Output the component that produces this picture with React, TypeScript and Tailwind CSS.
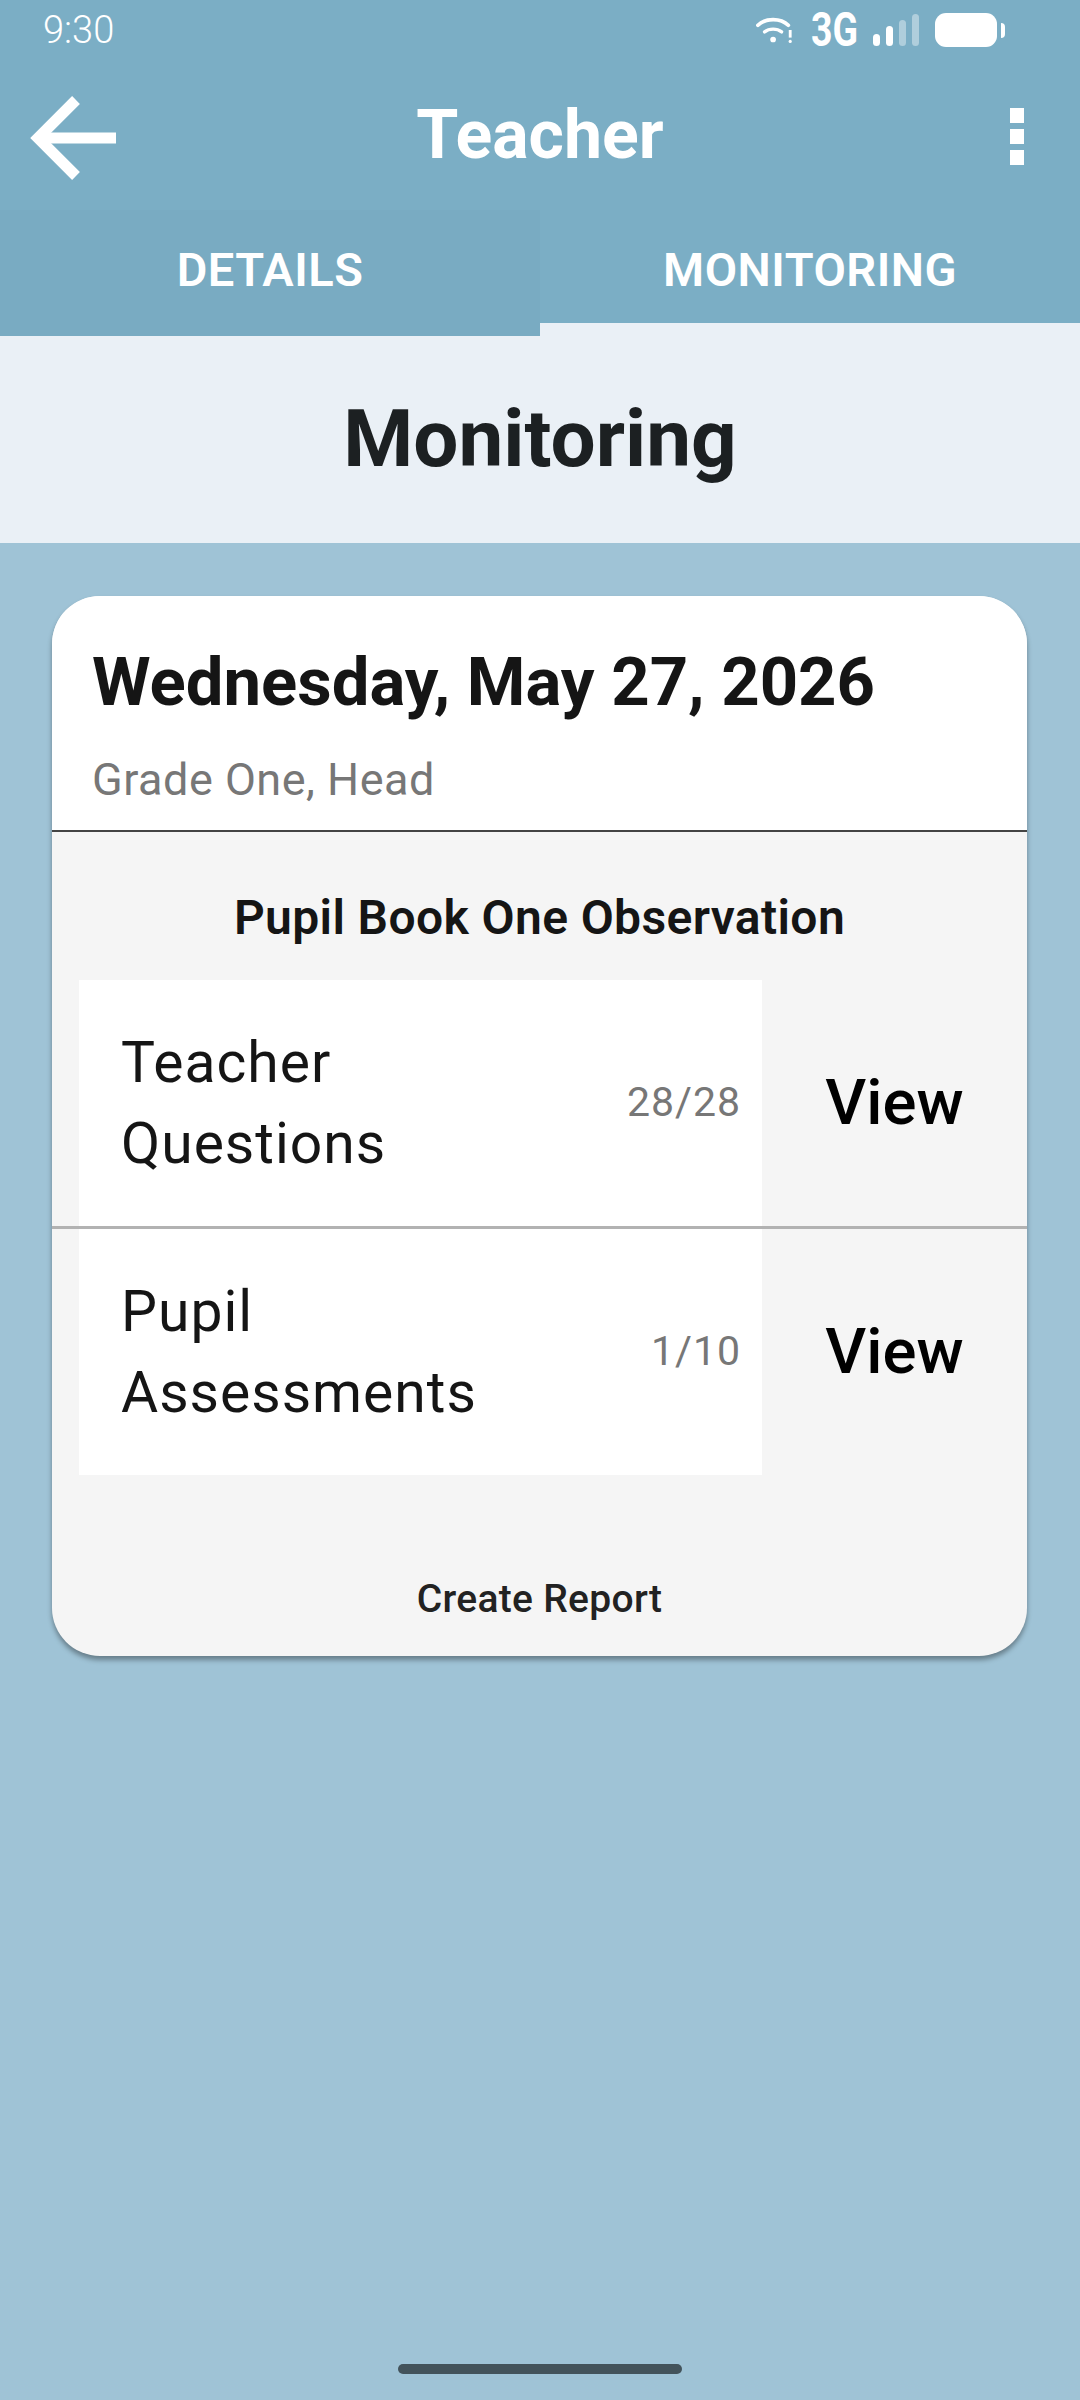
function Row({ a, b, n, border }: { a: string; b: string; n: string; border?: boolean }) {
  return (
    <div className={`flex items-stretch pl-[27px] ${border ? "border-b-[3px] border-[#b2b2b2]" : ""}`}>
      <div className="flex h-[246px] w-[683px] items-center justify-between bg-white pl-[42px] pr-[21px]">
        <div className="text-[57px] leading-[81px] tracking-[1px] text-[#151515]">
          <div>{a}</div>
          <div>{b}</div>
        </div>
        <div className="text-[41px] tracking-[1px] text-[#777777]">{n}</div>
      </div>
      <div className="flex flex-1 items-center justify-center text-[63.5px] font-medium text-black">View</div>
    </div>
  );
}

export default function App() {
  return (
    <div className="flex h-[2400px] w-[1080px] flex-col bg-[#9fc3d6] font-['Roboto',sans-serif]">
      <div className="bg-[#7baec5]">
        <div className="flex h-[60px] items-center justify-between pl-[43px] pr-[75px] text-white">
          <span className="text-[38px] font-[350]">9:30</span>
          <div className="flex items-center">
            <svg width="38" height="30" viewBox="0 0 40 30" fill="none" stroke="white" strokeLinecap="round">
              <path d="M2 10 C10 2 26 2 34 10" strokeWidth="4" />
              <path d="M9 17 C14 13 22 13 27 17" strokeWidth="3.5" />
              <circle cx="18" cy="25" r="3" fill="white" stroke="none" />
              <path d="M36 15 V23" strokeWidth="3" strokeLinecap="butt" />
              <circle cx="36" cy="27" r="1.7" fill="white" stroke="none" />
            </svg>
            <span className="ml-[17px] w-[49px] origin-left scale-x-[0.78] text-[48px] font-bold leading-none">3G</span>
            <div className="ml-[13px] flex h-[32px] items-end gap-[6px]">
              <div className="h-[12px] w-[7px] rounded-full bg-white" />
              <div className="h-[20px] w-[7px] rounded-full bg-white" />
              <div className="h-[26px] w-[7px] rounded-full bg-white/40" />
              <div className="h-[32px] w-[7px] rounded-full bg-white/40" />
            </div>
            <div className="ml-[16px] h-[34px] w-[62px] rounded-[11px] bg-white" />
            <div className="ml-[4px] h-[15px] w-[4px] rounded-r-full bg-white" />
          </div>
        </div>
        <div className="flex h-[150px] items-center text-white">
          <div className="flex flex-1">
            <svg className="ml-[30px] mt-[5px]" width="88" height="90" viewBox="0 0 88 90" fill="none" stroke="white" strokeWidth="11">
              <path d="M86 45 H10" />
              <path d="M46 7 L8 45 L46 83" />
            </svg>
          </div>
          <span className="text-[68px] font-bold leading-none">Teacher</span>
          <div className="flex flex-1 justify-end">
            <div className="mr-[56px] mt-[2px] flex w-[14px] flex-col gap-[6px]">
              <div className="h-[15px] bg-white" />
              <div className="h-[15px] bg-white" />
              <div className="h-[15px] bg-white" />
            </div>
          </div>
        </div>
      </div>
      <div className="flex h-[126px] items-start bg-[#eaf0f6] text-[47px] font-semibold text-white">
        <div className="flex h-[126px] w-[540px] justify-center bg-[#79abc2] pt-[36px] leading-none"><span className="tracking-[0.5px]">DETAILS</span></div>
        <div className="flex h-[113px] w-[540px] justify-center bg-[#7baec5] pt-[36px] leading-none"><span className="tracking-[0.5px]">MONITORING</span></div>
      </div>
      <div className="flex h-[207px] items-center justify-center bg-[#eaf0f6] pb-[2px] text-[80px] font-bold leading-none text-[#1c2022]">
        Monitoring
      </div>
      <div className="pl-[52px] pr-[53px] pt-[53px]">
        <div className="overflow-hidden rounded-[48px] bg-[#f5f5f5] shadow-[0_4px_5px_rgba(0,0,0,0.35)]">
          <div className="h-[236px] border-b-[2px] border-[#444444] bg-white pl-[40px] pt-[53px]">
            <div className="text-[67px] font-bold leading-none text-[#151515]">Wednesday, May 27, 2026</div>
            <div className="mt-[41px] text-[45px] leading-none tracking-[0.5px] text-[#777777]">Grade One, Head</div>
          </div>
          <div className="flex h-[148px] items-start justify-center pt-[62px] text-[48px] font-semibold leading-none tracking-[0.37px] text-[#151515]">
            Pupil Book One Observation
          </div>
          <Row a="Teacher" b="Questions" n="28/28" border />
          <Row a="Pupil" b="Assessments" n="1/10" />
          <div className="flex h-[181px] items-start justify-center pt-[105px] text-[39px] font-medium leading-none tracking-[0.3px] text-[#222222]">
            Create Report
          </div>
        </div>
      </div>
      <div className="mt-auto flex justify-center pb-[26px]">
        <div className="h-[10px] w-[284px] rounded-full bg-[#43535b]" />
      </div>
    </div>
  );
}
